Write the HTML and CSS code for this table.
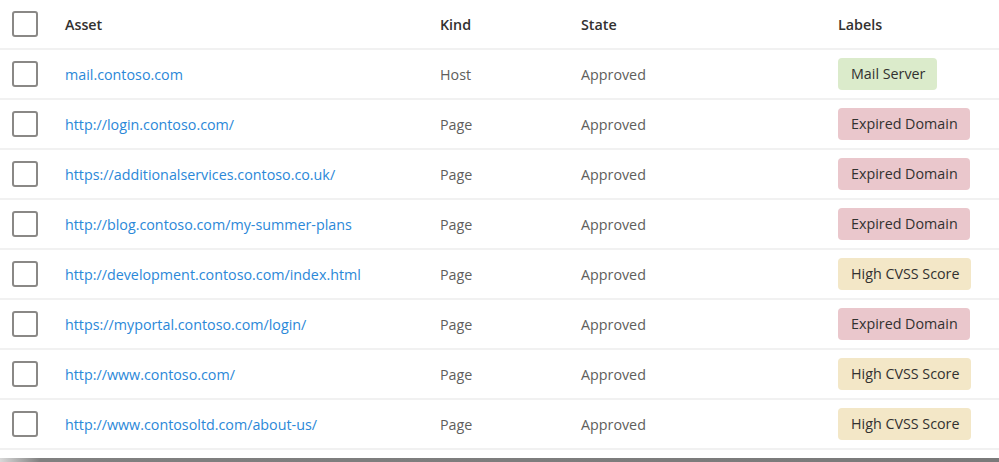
FILE: index.html
```html
<!DOCTYPE html>
<html>
<head>
<meta charset="utf-8">
<link rel="stylesheet" href="styles.css">
</head>
<body>
<div class="table">
  <div class="row head">
    <div class="cell check"><span class="box"></span></div>
    <div class="cell">Asset</div>
    <div class="cell">Kind</div>
    <div class="cell">State</div>
    <div class="cell">Labels</div>
  </div>
  <div class="row">
    <div class="cell check"><span class="box"></span></div>
    <div class="cell link">mail.contoso.com</div>
    <div class="cell">Host</div>
    <div class="cell">Approved</div>
    <div class="cell"><span class="tag green">Mail Server</span></div>
  </div>
  <div class="row">
    <div class="cell check"><span class="box"></span></div>
    <div class="cell link">http://login.contoso.com/</div>
    <div class="cell">Page</div>
    <div class="cell">Approved</div>
    <div class="cell"><span class="tag pink">Expired Domain</span></div>
  </div>
  <div class="row">
    <div class="cell check"><span class="box"></span></div>
    <div class="cell link">https://additionalservices.contoso.co.uk/</div>
    <div class="cell">Page</div>
    <div class="cell">Approved</div>
    <div class="cell"><span class="tag pink">Expired Domain</span></div>
  </div>
  <div class="row">
    <div class="cell check"><span class="box"></span></div>
    <div class="cell link">http://blog.contoso.com/my-summer-plans</div>
    <div class="cell">Page</div>
    <div class="cell">Approved</div>
    <div class="cell"><span class="tag pink">Expired Domain</span></div>
  </div>
  <div class="row">
    <div class="cell check"><span class="box"></span></div>
    <div class="cell link">http://development.contoso.com/index.html</div>
    <div class="cell">Page</div>
    <div class="cell">Approved</div>
    <div class="cell"><span class="tag yellow">High CVSS Score</span></div>
  </div>
  <div class="row">
    <div class="cell check"><span class="box"></span></div>
    <div class="cell link">https://myportal.contoso.com/login/</div>
    <div class="cell">Page</div>
    <div class="cell">Approved</div>
    <div class="cell"><span class="tag pink">Expired Domain</span></div>
  </div>
  <div class="row">
    <div class="cell check"><span class="box"></span></div>
    <div class="cell link">http://www.contoso.com/</div>
    <div class="cell">Page</div>
    <div class="cell">Approved</div>
    <div class="cell"><span class="tag yellow">High CVSS Score</span></div>
  </div>
  <div class="row">
    <div class="cell check"><span class="box"></span></div>
    <div class="cell link">http://www.contosoltd.com/about-us/</div>
    <div class="cell">Page</div>
    <div class="cell">Approved</div>
    <div class="cell"><span class="tag yellow">High CVSS Score</span></div>
  </div>
</div>
<div class="bottom-bar"></div>
</body>
</html>
```

FILE: styles.css
```css
html, body {
  margin: 0;
  padding: 0;
  background: #ffffff;
}
body {
  width: 999px;
  height: 462px;
  overflow: hidden;
  font-family: "Open Sans", "Noto Sans", sans-serif;
  font-size: 14.3px;
  color: #605e5c;
}
.table {
  height: 458px;
}
.row {
  display: grid;
  grid-template-columns: 65px 375px 141px 257px 1fr;
  height: 48px;
  border-bottom: 2px solid #f1f1f1;
  align-items: center;
}
.head {
  color: #323130;
  font-weight: 600;
}
.cell {
  white-space: nowrap;
}
.check {
  padding-left: 12px;
  display: flex;
  align-items: center;
}
.box {
  display: block;
  width: 22px;
  height: 22px;
  border: 2px solid #8a8886;
  border-radius: 3px;
}
.link {
  color: #2b88d8;
}
.tag {
  display: inline-block;
  padding: 0 12px 0 13px;
  height: 32px;
  line-height: 32px;
  border-radius: 4px;
  color: #323130;
}
.green { background: #dbebcb; }
.pink { background: #eac7cc; }
.yellow { background: #f3e7c7; }
.bottom-bar {
  height: 4px;
  background: linear-gradient(to right, #d8d8d8 0, #808080 40px, #7a7a7a 100%);
}
```
